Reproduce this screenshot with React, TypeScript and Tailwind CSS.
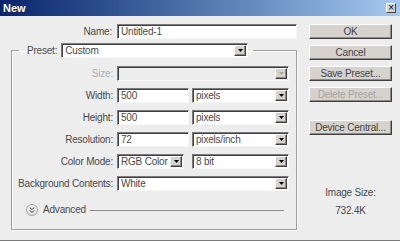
import React from 'react';

const sunken =
  'border border-t-[#7b7b7b] border-l-[#7b7b7b] border-b-[#f6f6f6] border-r-[#f6f6f6] shadow-[inset_1px_1px_0_#404040]';

function DropArrow({ disabled }: { disabled?: boolean }) {
  return (
    <span className="ml-auto mr-px flex h-[11px] w-[12px] shrink-0 items-center justify-center border border-t-white border-l-white border-b-[#404040] border-r-[#404040] bg-[#d6d3ce] shadow-[inset_-1px_-1px_0_#8a8a8a]">
      <svg width="5" height="3" viewBox="0 0 5 3">
        <path d="M0 0h5L2.5 3z" fill={disabled ? '#a8a8a8' : '#000'} />
      </svg>
    </span>
  );
}

function Field({ value, className = '' }: { value: string; className?: string }) {
  return (
    <div className={`flex h-[15px] items-center bg-white pl-[3px] ${sunken} ${className}`}>
      <span className="leading-none">{value}</span>
    </div>
  );
}

function Select({ value, className = '', disabled }: { value?: string; className?: string; disabled?: boolean }) {
  return (
    <div className={`flex h-[15px] items-center pl-[3px] ${disabled ? 'bg-[#ededed]' : 'bg-white'} ${sunken} ${className}`}>
      <span className="truncate leading-none">{value}</span>
      <DropArrow disabled={disabled} />
    </div>
  );
}

function Btn({ label, disabled }: { label: string; disabled?: boolean }) {
  return (
    <div
      className={`flex h-[15px] w-[83px] items-center justify-center border border-t-white border-l-white border-b-[#404040] border-r-[#404040] bg-[#d6d3ce] shadow-[inset_-1px_-1px_0_#8a8a8a] leading-none ${
        disabled ? 'text-[#a6a6a6]' : 'text-[#444]'
      }`}
    >
      {label}
    </div>
  );
}

function Label({ text, disabled }: { text: string; disabled?: boolean }) {
  return <div className={`flex h-[15px] items-center justify-end leading-none ${disabled ? 'text-[#b0b0b0]' : ''}`}>{text}</div>;
}

export default function App() {
  return (
    <div className="w-[400px] h-[241px] overflow-hidden bg-[#ededed] font-['Liberation_Sans',Arial,sans-serif] text-[10px] tracking-[-0.2px] text-[#4a4a4a] border-b border-[#7a7a7a]">
      {/* title bar */}
      <div className="flex h-[16px] items-center justify-between bg-linear-to-r from-[#0a246a] to-[#a6caf0] pl-[3px] pr-[4px]">
        <span className="text-[11px] font-bold text-white tracking-normal">New</span>
        <span className="flex h-[10px] w-[10px] items-center justify-center border border-t-white border-l-white border-b-[#404040] border-r-[#404040] bg-[#d6d3ce] text-[10px] leading-none text-black">
          ×
        </span>
      </div>

      <div className="flex pt-[8px]">
        {/* left side */}
        <div className="w-[297px] pl-[11px]">
          <div className="grid grid-cols-[101px_180px] gap-x-[5px]">
            <Label text="Name:" />
            <Field value="Untitled-1" />
          </div>

          <fieldset className="mt-[4px] w-[286px] border border-[#9c9c9c] pt-[8px] pb-[13px] shadow-[inset_1px_1px_0_#fff,1px_1px_0_#fff]">
            <legend className="ml-[7px] px-[8px] pr-[5px]">
              <div className="flex items-center">
                <span className="leading-none">Preset:</span>
                <Select value="Custom" className="ml-[4px] w-[187px]" />
              </div>
            </legend>

            <div className="grid grid-cols-[101px_172px] gap-x-[4px] gap-y-[7px]">
              <Label text="Size:" disabled />
              <Select disabled />

              <Label text="Width:" />
              <div className="flex gap-[3px]">
                <Field value="500" className="w-[72px]" />
                <Select value="pixels" className="flex-1" />
              </div>

              <Label text="Height:" />
              <div className="flex gap-[3px]">
                <Field value="500" className="w-[72px]" />
                <Select value="pixels" className="flex-1" />
              </div>

              <Label text="Resolution:" />
              <div className="flex gap-[3px]">
                <Field value="72" className="w-[72px]" />
                <Select value="pixels/inch" className="flex-1" />
              </div>

              <Label text="Color Mode:" />
              <div className="flex gap-[8px]">
                <Select value="RGB Color" className="w-[67px]" />
                <Select value="8 bit" className="flex-1" />
              </div>

              <Label text="Background Contents:" />
              <Select value="White" />
            </div>

            <div className="mt-[13px] flex h-[12px] items-center pl-[14px] pr-[12px]">
              <span className="flex h-[12px] w-[12px] items-center justify-center rounded-full border border-[#a0a0a0] bg-linear-to-b from-white to-[#dcdcdc]">
                <svg width="6" height="6" viewBox="0 0 6 6" fill="none" stroke="#333" strokeWidth="1">
                  <path d="M1 0.5l2 2 2-2M1 3.5l2 2 2-2" />
                </svg>
              </span>
              <span className="ml-[5px] leading-none">Advanced</span>
              <span className="ml-[4px] h-px flex-1 bg-[#8c8c8c]" />
            </div>
          </fieldset>
        </div>

        {/* right side */}
        <div className="ml-[12px] flex w-[83px] flex-col">
          <div className="flex flex-col gap-[6px]">
            <Btn label="OK" />
            <Btn label="Cancel" />
            <Btn label="Save Preset..." />
            <Btn label="Delete Preset..." disabled />
          </div>
          <div className="mt-[18px]">
            <Btn label="Device Central..." />
          </div>
          <div className="mt-[52px] text-center leading-[12px]">Image Size:</div>
          <div className="mt-[6px] text-center leading-[12px]">732.4K</div>
        </div>
      </div>
    </div>
  );
}
